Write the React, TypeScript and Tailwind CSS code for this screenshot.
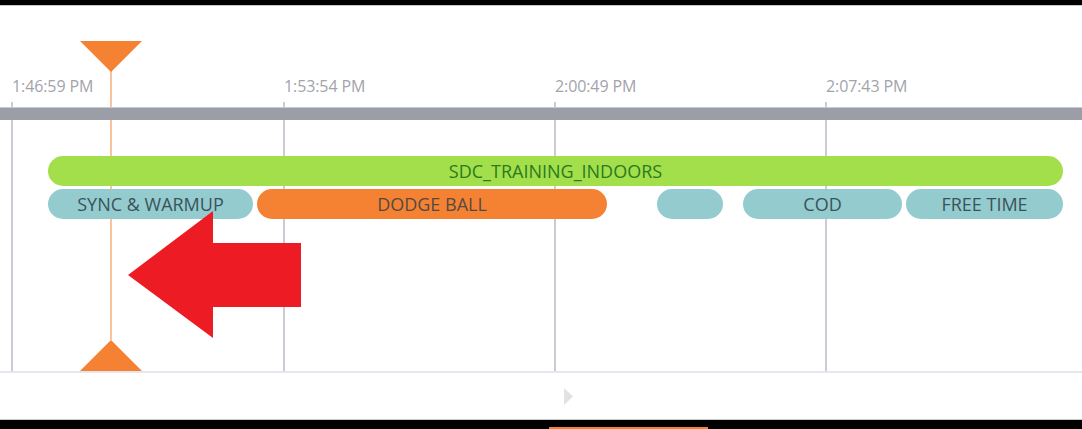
import React from "react";

type Seg = {
  label: string;
  width: number;
  gap: number;
  tone: "teal" | "orange";
};

const ticks = [
  { x: 12, label: "1:46:59 PM" },
  { x: 284, label: "1:53:54 PM" },
  { x: 555, label: "2:00:49 PM" },
  { x: 826, label: "2:07:43 PM" },
];

// segments of the second row, widths in px (gap = space before the segment)
const segments: Seg[] = [
  { label: "SYNC & WARMUP", width: 205, gap: 0, tone: "teal" },
  { label: "DODGE BALL", width: 350, gap: 4, tone: "orange" },
  { label: "", width: 66, gap: 50, tone: "teal" },
  { label: "COD", width: 159, gap: 20, tone: "teal" },
  { label: "FREE TIME", width: 157, gap: 4, tone: "teal" },
];

const font = { fontFamily: '"Open Sans", "Noto Sans", sans-serif' };

const App: React.FC = () => {
  return (
    <div className="w-[1082px] h-[429px] bg-white overflow-hidden flex flex-col" style={font}>
      {/* top frame */}
      <div className="h-[5px] bg-black shrink-0" />
      <div className="h-px bg-[#c8c8c8] shrink-0" />

      {/* timeline area */}
      <div className="relative h-[365px] shrink-0">
        {/* grid lines, behind items */}
        {ticks.map((t) => (
          <div
            key={t.x}
            className="absolute top-[96px] bottom-0 w-[2px] bg-[#cbcbd3]"
            style={{ left: t.x - 1 }}
          />
        ))}

        {/* playhead line */}
        <div className="absolute left-[110px] top-[65px] bottom-[31px] w-[2px] bg-[#f9c3a0]" />

        {/* labels */}
        <div className="relative h-[20px] mt-[69px]">
          {ticks.map((t) => (
            <span
              key={t.label}
              className="absolute top-[1px] text-[16px] leading-[20px] text-[#a3a3ab] tracking-[-0.1px]"
              style={{ left: t.x }}
            >
              {t.label}
            </span>
          ))}
        </div>

        {/* axis bar */}
        <div className="relative mt-[12px] h-[13px] bg-[#9b9da7] border-t border-[#c9cad1]" />

        {/* phase bar */}
        <div className="mt-[36px] ml-[48px] w-[1015px] h-[30px] rounded-full bg-[#a2df4b] flex items-center justify-center relative">
          <span className="text-[18px] font-medium text-[#2a7a20]">SDC_TRAINING_INDOORS</span>
        </div>

        {/* drill row */}
        <div className="mt-[3px] ml-[48px] flex h-[30px] relative">
          {segments.map((s, i) => (
            <div
              key={i}
              className={`h-full rounded-full flex items-center justify-center shrink-0 ${
                s.tone === "orange" ? "bg-[#f58232] text-[#554a43]" : "bg-[#94cbcf] text-[#3a535a]"
              }`}
              style={{ width: s.width, marginLeft: s.gap }}
            >
              <span className="text-[18px] font-medium">{s.label}</span>
            </div>
          ))}
        </div>

        {/* playhead handles */}
        <svg className="absolute left-[80px] top-[35px]" width="62" height="31" viewBox="0 0 62 31">
          <polygon points="0,0 62,0 31,31" fill="#f58232" />
        </svg>
        <svg className="absolute left-[80px] bottom-0" width="62" height="31" viewBox="0 0 62 31">
          <polygon points="31,0 62,31 0,31" fill="#f58232" />
        </svg>

        {/* annotation arrow */}
        <svg className="absolute left-[128px] top-[205px]" width="174" height="128" viewBox="0 0 174 128">
          <polygon points="0,64 85,0 85,32 173,32 173,96 85,96 85,127" fill="#ed1c24" />
        </svg>
      </div>

      {/* scroll strip */}
      <div className="h-[2px] bg-[#e6e6ee] shrink-0" />
      <div className="h-[46px] flex items-start pt-[15px] pl-[564px] shrink-0">
        <svg width="9" height="17" viewBox="0 0 9 17">
          <polygon points="0,0 9,8.5 0,17" fill="#e2e2e2" />
        </svg>
      </div>

      {/* bottom frame */}
      <div className="h-px bg-[#c8c8c8] shrink-0" />
      <div className="relative flex-1 bg-black">
        <div className="absolute left-[549px] w-[159px] bottom-0 h-[2px] bg-[#f58232]" />
      </div>
    </div>
  );
};

export default App;
